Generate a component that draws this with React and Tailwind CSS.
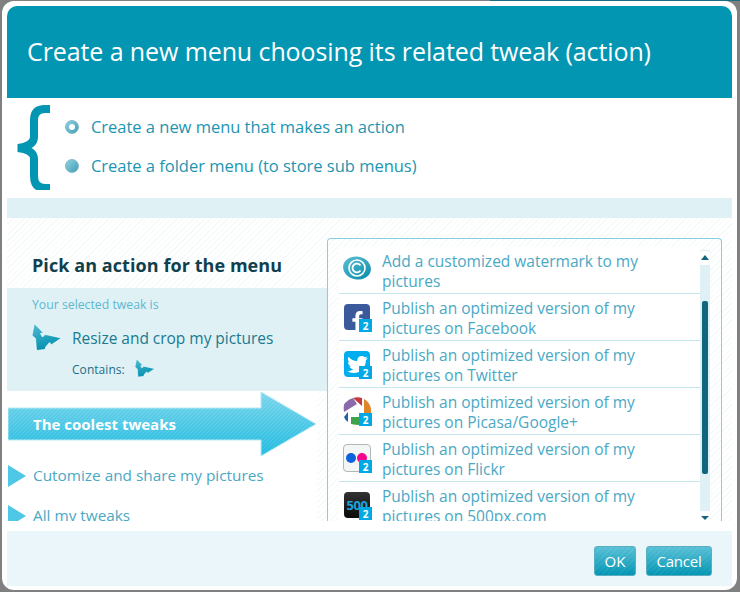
import React from "react";
import { FaFacebookF, FaTwitter } from "react-icons/fa";

const hatch = "bg-[repeating-linear-gradient(135deg,#f4f9fa_0,#f4f9fa_1px,#ffffff_1px,#ffffff_4px)]";
const buttonBg =
  "bg-[repeating-linear-gradient(135deg,rgba(255,255,255,0.07)_0,rgba(255,255,255,0.07)_1px,transparent_1px,transparent_4px),linear-gradient(to_bottom,#58c0d6,#0396b3)]";

const Badge = () => (
  <span className="absolute left-[15px] top-[15px] flex h-[13px] w-[13px] items-center justify-center bg-[#00a9e6] text-[10px] font-bold leading-none text-white">
    2
  </span>
);

const TweakIcon = ({ size }) => (
  <svg width={size} height={size} viewBox="0 0 30 28" className="shrink-0">
    <defs>
      <linearGradient id="tw" x1="0" y1="0" x2="0.3" y2="1">
        <stop offset="0" stopColor="#52bcd4" />
        <stop offset="1" stopColor="#0391b0" />
      </linearGradient>
    </defs>
    <path
      d="M2.3 0.5 L11.5 10 L8.5 10.5 L10.5 14 L13 11.5 L16 12 L29.5 15 L19 22 L17.7 19.5 L14 23.5 L13 26.5 L4.5 27.5 L3.5 15.5 L0 12.5 Z"
      fill="url(#tw)"
      stroke="#fff"
      strokeWidth="0.7"
    />
  </svg>
);

const Radio = ({ checked }) => (
  <span className="flex h-[14px] w-[14px] shrink-0 items-center justify-center rounded-full bg-gradient-to-br from-[#8fd3e2] to-[#3f9db5] border border-[#7fb9c8]">
    {checked && <span className="h-[6px] w-[6px] rounded-full bg-white" />}
  </span>
);

const Eye = () => (
  <svg width="30" height="26" viewBox="0 0 30 26" className="-ml-[2px] -mt-[2px]">
    <defs>
      <linearGradient id="eye" x1="0" y1="0" x2="1" y2="1">
        <stop offset="0" stopColor="#62c0d4" />
        <stop offset="1" stopColor="#028aa8" />
      </linearGradient>
    </defs>
    <ellipse cx="15" cy="13" rx="14" ry="11.5" transform="rotate(10 15 13)" fill="url(#eye)" />
    <circle cx="15" cy="13" r="8" fill="none" stroke="#fff" strokeWidth="1.6" />
    <path d="M18.5 10.5 A4.4 4.4 0 1 0 18.5 15.5" fill="none" stroke="#fff" strokeWidth="1.8" />
  </svg>
);

const Picasa = () => (
  <svg width="28" height="28" viewBox="0 0 28 28" className="-ml-[1px] -mt-[1px]">
    <path d="M10 1 A14 14 0 0 1 19 1 L19 9 Z" fill="#c8383f" />
    <path d="M21 2 A14 14 0 0 1 28 12 L28 20 L21 20 Z" fill="#e0862a" />
    <path d="M8 20 H17 V28 Q12 28 8 27 Z" fill="#3ea34a" />
    <path d="M5 15 V25 Q2 23 1 20 Z" fill="#1f64a8" />
    <path d="M1 15 Q0 8 2 6 Q6 2 10 1 L14 7 Z" fill="#8a6aa8" />
  </svg>
);

const rows = [
  { line1: "Add a customized watermark to my", line2: "pictures", icon: <Eye /> },
  {
    line1: "Publish an optimized version of my",
    line2: "pictures on Facebook",
    badge: true,
    icon: (
      <span className="flex h-[26px] w-[26px] items-end justify-end overflow-hidden rounded-[4px] bg-[#3b5a9c] pr-[3px] text-white">
        <FaFacebookF size={19} />
      </span>
    ),
  },
  {
    line1: "Publish an optimized version of my",
    line2: "pictures on Twitter",
    badge: true,
    icon: (
      <span className="flex h-[26px] w-[26px] items-center justify-center rounded-[4px] bg-[#00aeef] text-white">
        <FaTwitter size={21} />
      </span>
    ),
  },
  {
    line1: "Publish an optimized version of my",
    line2: "pictures on Picasa/Google+",
    badge: true,
    icon: <Picasa />,
  },
  {
    line1: "Publish an optimized version of my",
    line2: "pictures on Flickr",
    badge: true,
    icon: (
      <span className="-ml-px -mt-px flex h-[28px] w-[28px] items-center gap-px rounded-[4px] border border-[#b0b8ba] bg-[#f4f6f6] pl-[2px]">
        <span className="h-[10px] w-[10px] rounded-full bg-[#0a63dc]" />
        <span className="h-[10px] w-[10px] rounded-full bg-[#f5048c]" />
      </span>
    ),
  },
  {
    line1: "Publish an optimized version of my",
    line2: "pictures on 500px.com",
    badge: true,
    icon: (
      <span className="flex h-[26px] w-[26px] items-center justify-center rounded-[4px] bg-gradient-to-b from-[#333] to-[#0a0a0a] text-[13px] font-bold leading-none tracking-[-0.5px] text-[#1aa3dc]">
        500
      </span>
    ),
  },
];

export default function App() {
  return (
    <div className="h-[592px] w-[740px] overflow-hidden bg-[#808080] font-['Open_Sans','Noto_Sans',sans-serif]">
      <div className="flex h-px">
        <div className="w-[490px]" />
        <div className="flex-1 bg-[#1a6d80]" />
      </div>
      <div className="ml-[2px] h-[589px] w-[735px] rounded-[12px] bg-white pl-[5px] pt-[5px]">
        <div className="w-[725px]">
          <div className="flex h-[92px] items-center rounded-t-[10px] bg-[#0396b3] pl-5 text-[25px] tracking-[-0.1px] text-white">
            Create a new menu choosing its related tweak (action)
          </div>

          <div className="flex h-[100px] items-center">
            <svg width="38" height="86" viewBox="0 0 38 86" className="ml-[10px] mt-[-2px] shrink-0">
              <path
                d="M33 5 H28 Q17 5 17 16 V33 Q17 42 1 44 Q17 46 17 55 V72 Q17 84 28 84 H33"
                fill="none"
                stroke="#0396b3"
                strokeWidth="8"
              />
            </svg>
            <div className="-mt-[4px] ml-[10px] flex flex-col gap-[22px] text-[16.5px] leading-[17px] tracking-[-0.02px] text-[#1b95b0]">
              <div className="flex items-center gap-3">
                <Radio checked />
                <span>Create a new menu that makes an action</span>
              </div>
              <div className="flex items-center gap-3">
                <Radio />
                <span>Create a folder menu (to store sub menus)</span>
              </div>
            </div>
          </div>

          <div className="h-5 bg-[#dff1f5]" />

          <div className={`flex h-[303px] ${hatch}`}>
            <div className="flex w-[320px] flex-col">
              <div className="flex h-[70px] items-center pl-[25px] pt-6 text-[18px] font-bold tracking-[0.07px] text-[#103f4e]">
                Pick an action for the menu
              </div>
              <div className="h-[103px] bg-[#dff1f5] pl-[25px] pt-[9px]">
                <div className="text-[12.25px] leading-4 text-[#5cb8cf]">Your selected tweak is</div>
                <div className="mt-[9px] flex h-[30px] items-center">
                  <TweakIcon size={30} />
                  <span className="ml-[10px] mt-[3px] text-[15.5px] tracking-[-0.03px] text-[#1a7a90]">
                    Resize and crop my pictures
                  </span>
                </div>
                <div className="mt-[5px] flex h-[22px] items-center pl-10 text-[12px] tracking-[0.05px] text-[#1c6d83]">
                  <span className="mt-[3px]">Contains:</span>
                  <span className="ml-[10px]">
                    <TweakIcon size={20} />
                  </span>
                </div>
              </div>
              <div className="mr-[10px] flex-1 overflow-hidden bg-white">
                <div className="relative ml-px mt-px flex h-[64px] items-center pl-[25px] text-[15px] font-bold text-white">
                  <svg width="308" height="64" viewBox="0 0 308 64" className="absolute left-0 top-0">
                    <defs>
                      <linearGradient id="arrow" x1="0" y1="0" x2="0" y2="1">
                        <stop offset="0" stopColor="#7cd6ec" />
                        <stop offset="1" stopColor="#21bbe0" />
                      </linearGradient>
                      <pattern id="arrowHatch" width="4" height="4" patternUnits="userSpaceOnUse">
                        <path d="M0 4 L4 0" stroke="#fff" strokeOpacity="0.12" strokeWidth="1" />
                      </pattern>
                    </defs>
                    <path d="M0 16 H253 V0 L308 32 L253 64 V48 H0 Z" fill="url(#arrow)" stroke="#b9e8f3" strokeWidth="1" />
                    <path d="M0 16 H253 V0 L308 32 L253 64 V48 H0 Z" fill="url(#arrowHatch)" />
                  </svg>
                  <span className="relative">The coolest tweaks</span>
                </div>
                {["Cutomize and share my pictures", "All my tweaks"].map((label) => (
                  <div key={label} className="flex h-10 items-center text-[15.35px] text-[#4aa8c4]">
                    <svg width="18" height="22" viewBox="0 0 18 22" className="ml-px shrink-0">
                      <path d="M0 0 L18 11 L0 22 Z" fill="#4ec8e6" />
                    </svg>
                    <span className="ml-[7px]">{label}</span>
                  </div>
                ))}
              </div>
            </div>

            <div className={`mt-5 flex h-[283px] w-[395px] overflow-hidden rounded-t-[4px] border border-b-0 border-[#85cfe0] pl-[11px] ${hatch}`}>
              <div className="w-[361px] pt-2">
                {rows.map((row) => (
                  <div
                    key={row.line1 + row.line2}
                    className="relative flex h-[47px] items-start border-b border-[#c5e5ec] bg-white pl-[43px] pt-1 text-[15.5px] leading-5 text-[#4aa8c4]"
                  >
                    <span className="absolute left-[5px] top-[10px] h-[26px] w-[26px]">
                      {row.icon}
                      {row.badge && <Badge />}
                    </span>
                    <span className="whitespace-pre-line">{row.line1 + "\n" + row.line2}</span>
                  </div>
                ))}
              </div>
              <div className="mt-[11px] flex w-[10px] flex-col items-center bg-[#dff1f5]">
                <div className="mt-px flex h-[14px] w-[10px] items-start justify-center rounded-[2px] bg-white pt-[4px]">
                  <span className="h-0 w-0 border-x-[4px] border-b-[5px] border-x-transparent border-b-[#11657f]" />
                </div>
                <div className="mt-9 h-[173px] w-[6px] rounded-[2px] bg-[#11657f]" />
                <div className="mt-auto flex h-[10px] w-[10px] items-start justify-center bg-white pt-[5px]">
                  <span className="h-0 w-0 border-x-[4px] border-t-[4px] border-x-transparent border-t-[#11657f]" />
                </div>
              </div>
            </div>
          </div>

          <div className="mt-[10px] flex h-[55px] items-center justify-end gap-[10px] bg-[#eaf6f9] pr-5 pt-[5px]">
            <button className={`h-[30px] w-[42px] rounded-[3px] border border-[#5aaec2] text-[15px] text-white ${buttonBg}`}>
              OK
            </button>
            <button className={`h-[30px] w-[66px] rounded-[3px] border border-[#5aaec2] text-[15px] tracking-[-0.2px] text-white ${buttonBg}`}>
              Cancel
            </button>
          </div>
        </div>
      </div>
    </div>
  );
}
